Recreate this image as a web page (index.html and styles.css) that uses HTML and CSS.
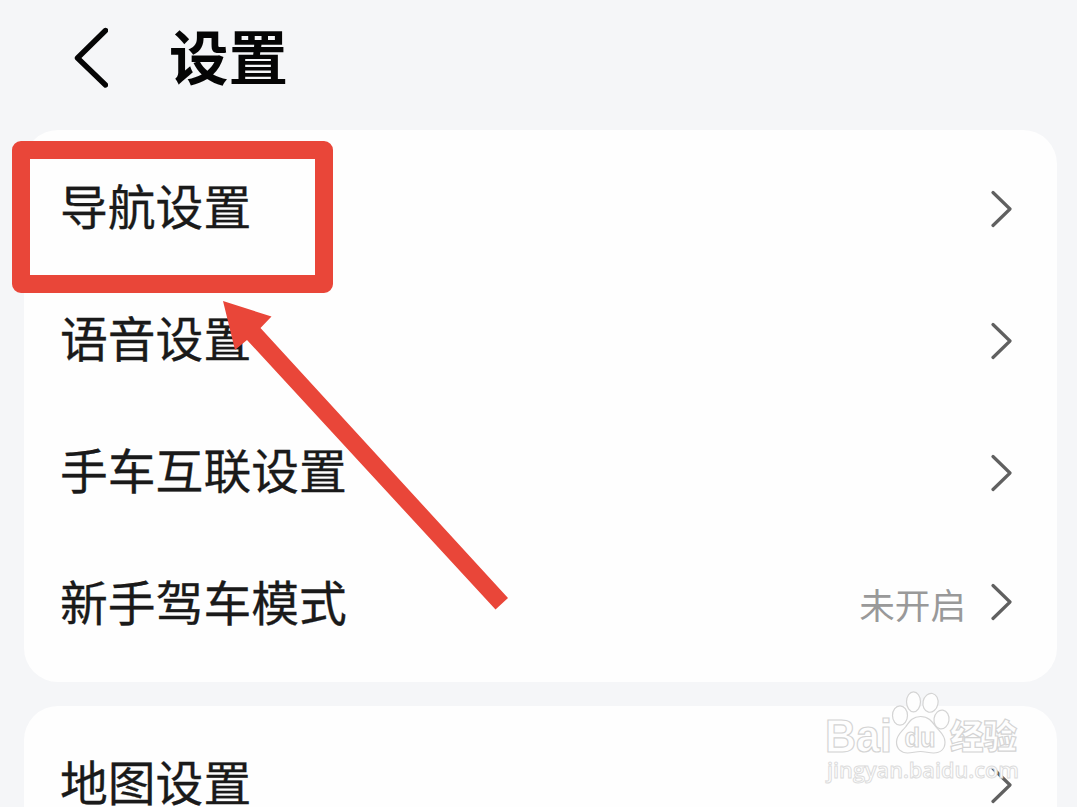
FILE: index.html
```html
<!DOCTYPE html>
<html lang="zh-CN">
<head>
<meta charset="utf-8">
<title>设置</title>
<link rel="stylesheet" href="styles.css">
</head>
<body>
<main class="screen">
  <header class="header">
    <svg class="back" viewBox="0 0 36 62" width="36" height="62"><path d="M33.500 3.500 5.500 31 33.500 58"/></svg>
    <h1 class="title">设置</h1>
  </header>
  <section class="card">
    <div class="row"><span class="label">导航设置</span><svg class="chevron" viewBox="0 0 22 38" width="22" height="38"><path d="M3 2.5 20 19 3 35.500"/></svg></div>
    <div class="row"><span class="label">语音设置</span><svg class="chevron" viewBox="0 0 22 38" width="22" height="38"><path d="M3 2.5 20 19 3 35.500"/></svg></div>
    <div class="row"><span class="label">手车互联设置</span><svg class="chevron" viewBox="0 0 22 38" width="22" height="38"><path d="M3 2.5 20 19 3 35.500"/></svg></div>
    <div class="row row-value"><span class="label">新手驾车模式</span><span class="value">未开启</span><svg class="chevron" viewBox="0 0 22 38" width="22" height="38"><path d="M3 2.5 20 19 3 35.500"/></svg></div>
  </section>
  <section class="card">
    <div class="row"><span class="label">地图设置</span><svg class="chevron" viewBox="0 0 22 38" width="22" height="38"><path d="M3 2.5 20 19 3 35.500"/></svg></div>
  </section>

  <div class="highlight"></div>
  <svg class="arrow" viewBox="0 0 290 312" width="290" height="312"><path d="M3 1 51.500 16.500 40.500 28 288 298 275.500 309.500 27 40 15 50Z"/></svg>

  <svg class="watermark" viewBox="0 0 210 100" width="210" height="100">
    <g class="mark">
      <text class="brand" x="5" y="61.500" textLength="67" lengthAdjust="spacingAndGlyphs">Bai</text>
      <ellipse cx="80" cy="25.500" rx="7.500" ry="9.700"/>
      <ellipse cx="93.500" cy="11.800" rx="7" ry="10"/>
      <ellipse cx="110.500" cy="12.800" rx="7.500" ry="9.500" transform="rotate(12 110.500 12.800)"/>
      <ellipse cx="121.500" cy="29.500" rx="7.500" ry="9.500" transform="rotate(8 121.500 29.500)"/>
      <path d="M100.500 26.500c-8 0-11 5-15 10.500-4 5-9 8-9 15 0 7 5 11 11 11 5 0 8-1.500 13-1.500s8 1.500 13 1.500c7 0 11.500-4 11.500-11 0-7-5-10-9-15-4-5.500-7.500-10.500-15.500-10.500Z"/>
      <text class="du" x="84.500" y="56.500" textLength="31" lengthAdjust="spacingAndGlyphs">du</text>
      <text class="cjk" x="130" y="58.500" textLength="67" lengthAdjust="spacingAndGlyphs">经验</text>
      <text class="url" x="7" y="87.500" textLength="192" lengthAdjust="spacingAndGlyphs">jingyan.baidu.com</text>
    </g>
  </svg>
</main>
</body>
</html>
```
FILE: styles.css
```css
body {
  margin: 0;
  background: #f5f6f8;
  font-family: "Noto Sans CJK SC", sans-serif;
  overflow: hidden;
}
.screen {
  position: relative;
  box-sizing: border-box;
  width: 1077px;
  height: 807px;
  padding: 0 20px 0 24px;
  overflow: hidden;
}
.header {
  display: flex;
  align-items: center;
  box-sizing: border-box;
  height: 130px;
  padding: 0 0 14px 48px;
  gap: 61px;
}
.back {
  fill: none;
  stroke: #050505;
  stroke-width: 5.4;
  stroke-linecap: round;
  stroke-linejoin: round;
}
.title {
  margin: 0;
  padding-bottom: 9px;
  font-size: 59.5px;
  line-height: 80px;
  font-weight: 700;
  color: #050505;
}
.card {
  padding: 12px 45px 12px 36px;
  border-radius: 34px;
  background: #fefefe;
  margin-bottom: 24px;
}
.row {
  display: flex;
  align-items: center;
  height: 132px;
}
.label {
  flex: 1;
  padding-bottom: 7px;
  font-size: 47.8px;
  line-height: 64px;
  color: #1a1a1a;
  -webkit-text-stroke: 0.3px #1a1a1a;
}
.value {
  margin-right: 24px;
  font-size: 35.6px;
  line-height: 48px;
  color: #999;
}
.chevron {
  margin-top: 2px;
  fill: none;
  stroke: #606060;
  stroke-width: 3.2;
  stroke-linecap: round;
  stroke-linejoin: round;
}
.row-value .chevron {
  margin-top: 0;
  margin-bottom: 5px;
}
.highlight {
  position: absolute;
  left: 12px;
  top: 141px;
  box-sizing: border-box;
  width: 321px;
  height: 152px;
  border: 18px solid #e94639;
  border-radius: 9px;
}
.arrow {
  position: absolute;
  left: 220px;
  top: 300px;
  fill: #e94639;
}
.watermark {
  position: absolute;
  left: 820px;
  top: 690px;
}
.mark {
  fill: #fefefe;
  stroke: #d4d4d4;
  stroke-width: 1.2;
}
.brand {
  font-family: "Liberation Sans", sans-serif;
  font-size: 46px;
  font-weight: 700;
}
.du {
  font-family: "Liberation Sans", sans-serif;
  font-size: 27px;
  font-weight: 700;
}
.cjk {
  font-size: 34px;
  font-weight: 900;
}
.url {
  font-family: "Open Sans", sans-serif;
  font-size: 22px;
  font-weight: 600;
  stroke: #dcdcdc;
  stroke-width: 1;
}
```
